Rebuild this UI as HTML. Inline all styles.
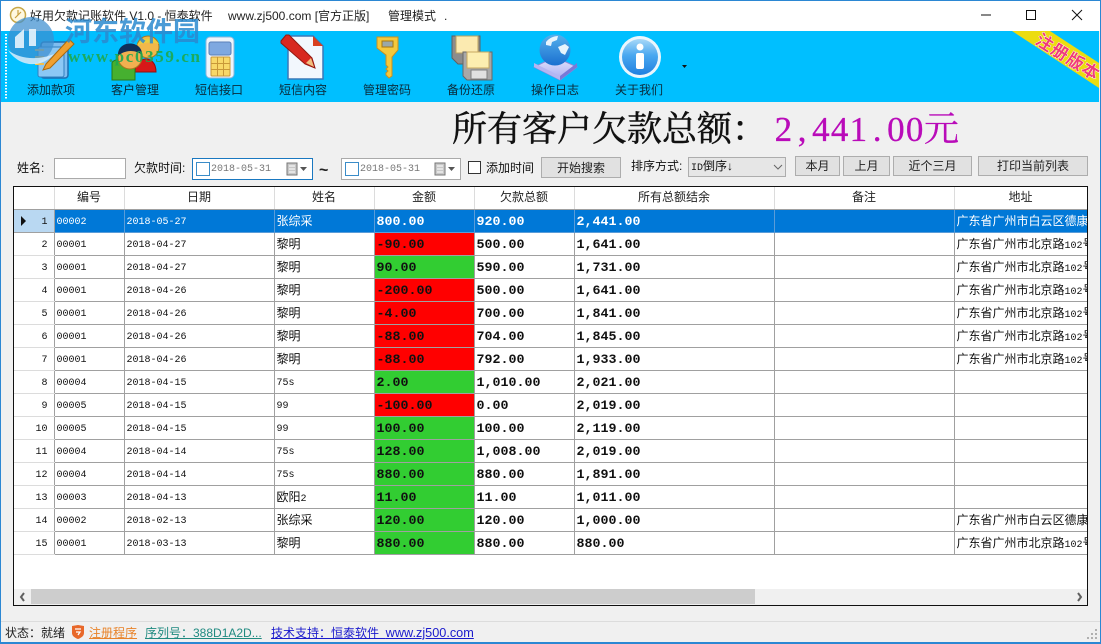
<!DOCTYPE html>
<html><head><meta charset="utf-8"><style>
html,body{margin:0;padding:0}
body{width:1101px;height:644px;overflow:hidden;position:relative;background:#f0f0f0;font-family:"Liberation Sans","Noto Sans CJK SC",sans-serif;font-size:12px;color:#111}
.a{position:absolute;white-space:nowrap}
.lb{position:absolute;top:83px;width:84px;text-align:center;font-size:12px;line-height:15px;color:#0a2a3a}
.btn{position:absolute;background:#e1e1e1;border:1px solid #adadad;box-sizing:border-box;text-align:center;font-size:12px;color:#222}
.dp{position:absolute;top:158px;height:22px;box-sizing:border-box;background:#fff;border:1px solid #aaa}
.dp i{position:absolute;left:3px;top:3px;width:12px;height:12px;border:1px solid #3a8cc8;background:#fff}
.dp b{position:absolute;left:18px;top:4px;font:normal 10px/14px "Liberation Mono",monospace;color:#777}
table{position:absolute;left:14px;top:187px;border-collapse:collapse;table-layout:fixed;width:1073px;background:#fff}
td,th{height:22px;padding:0 0 0 2px;border:1px solid #a0a0a0;font-weight:normal;overflow:hidden;white-space:nowrap;box-sizing:border-box;font-size:12px;line-height:22px}
tr{height:23px}
tr.h{height:22px}
th{border:0;border-right:1px solid #dcdcdc;border-bottom:1px solid #a0a0a0;text-align:center;color:#222;padding:0;line-height:21px;height:22px}
td.n{border:0;border-bottom:1px solid #dcdcdc;border-right:1px solid #a0a0a0;text-align:right;padding-right:6px;padding-top:4px;font:10px/18px "Liberation Mono",monospace}
td.d,td.s{font:10px/18px "Liberation Mono",monospace;padding-top:4px}
td.m{font:bold 13.33px/18px "Liberation Mono",monospace;color:#111;padding-top:4px}
td.r{background:#ff0000}
td.g{background:#32cd32}
td.c{font-size:12px}
tr.sel td{background:#0078d7;color:#fff;border-color:#5a9cd8}
tr.sel td.n{background:#b9d8f2;color:#111;border-color:#a0a0a0}
td.ad span{font:10px "Liberation Mono",monospace}
.ch{display:inline-block;width:18.75px;text-align:center;font-family:"Liberation Serif",serif;font-size:35px}
</style></head><body>

<!-- window frame -->
<div class="a" style="left:0;top:0;width:1101px;height:31px;background:#fff"></div>
<div class="a" style="left:0;top:0;width:1101px;height:1px;background:#2b87d3"></div>
<div class="a" style="left:0;top:0;width:1px;height:644px;background:#2b87d3"></div>
<div class="a" style="left:1100px;top:0;width:1px;height:644px;background:#2b87d3"></div>
<div class="a" style="left:0;top:642px;width:1101px;height:2px;background:#2b87d3"></div>

<!-- title bar -->
<svg class="a" style="left:9px;top:6px" width="18" height="18" viewBox="0 0 18 18"><circle cx="9" cy="9" r="7.5" fill="#fff8e0" stroke="#c8a848" stroke-width="1.5"/><path d="M9 4v5l-3 3M9 9l3-3" stroke="#c8a040" fill="none" stroke-width="1.2"/></svg>
<div class="a" style="left:30px;top:8px;font-size:12px;line-height:16px;color:#222">好用欠款记账软件 V1.0 - 恒泰软件</div>
<div class="a" style="left:228px;top:8px;font-size:12px;line-height:16px;color:#222">www.zj500.com [官方正版]</div>
<div class="a" style="left:388px;top:8px;font-size:12px;line-height:16px;color:#222">管理模式</div>
<div class="a" style="left:444px;top:8px;font-size:12px;line-height:16px;color:#222">.</div>
<svg class="a" style="left:970px;top:5px" width="125" height="22" viewBox="0 0 125 22"><path d="M11 10h10" stroke="#111" stroke-width="1"/><rect x="56.500" y="5.500" width="9" height="9" fill="none" stroke="#111"/><path d="M102 5l10 10M112 5l-10 10" stroke="#111" fill="none"/></svg>

<!-- toolbar -->
<div class="a" style="left:1px;top:31px;width:1098px;height:71px;background:#00bfff"></div>
<div class="a" style="left:5px;top:34px;width:2px;height:66px;background-image:linear-gradient(#fff 50%,transparent 50%);background-size:2px 3px"></div>

<svg class="a" style="left:0;top:31px" width="1101" height="71" viewBox="0 31 1101 71">
 <defs>
  <linearGradient id="gi" x1="0" y1="0" x2="0" y2="1"><stop offset="0" stop-color="#a8d8f8"/><stop offset=".45" stop-color="#4aa8f0"/><stop offset="1" stop-color="#1f80e0"/></linearGradient>
  <linearGradient id="gg" x1="0" y1="0" x2="0" y2="1"><stop offset="0" stop-color="#55b0ec"/><stop offset="1" stop-color="#1a70d0"/></linearGradient>
  <linearGradient id="gb" x1="0" y1="0" x2="0" y2="1"><stop offset="0" stop-color="#e4e6fc"/><stop offset="1" stop-color="#a8aaf2"/></linearGradient>
 </defs>
 <!-- 添加款项 -->
 <rect x="41" y="42" width="27" height="36" rx="3" fill="#7fbdf0" stroke="#1f6fb0" stroke-width="1.500"/>
 <rect x="38" y="47" width="26" height="30" rx="2" fill="#8cc8f5" stroke="#2f80c0"/>
 <path d="M35 50h9M35 57h9M35 64h9" stroke="#f0c050" stroke-width="2"/>
 <path d="M46 64l23-25 5 5-24 24-7 2z" fill="#f0a030" stroke="#a86a10"/>
 <!-- 客户管理 -->
 <path d="M135 72c0-9 6-13 11-13s10 4 10 13z" fill="#d81818" stroke="#901010"/>
 <circle cx="148" cy="47" r="11" fill="#f2b84a" stroke="#a87820"/>
 <path d="M137 45c4-8 18-9 22-1-6-2-14-2-22 1z" fill="#e8d040"/>
 <path d="M112 80V63c0-2 5-4 11-4s12 2 12 5v16z" fill="#46b030" stroke="#2a7a18"/>
 <circle cx="130" cy="57" r="12" fill="#f2b050" stroke="#a87820"/>
 <path d="M118 56c-1-17 25-16 24-1-5-5-17-6-24 1z" fill="#10305a"/>
 <!-- 短信接口 -->
 <rect x="206" y="37" width="28" height="41" rx="4" fill="#eef4fb" stroke="#8fb4d8"/>
 <rect x="209" y="42" width="22" height="13" rx="2" fill="#7ea8e0" stroke="#5a80b8"/>
 <rect x="211" y="57" width="19" height="19" rx="1" fill="#f8d868" stroke="#c89838"/>
 <path d="M217.500 57v19M223.500 57v19M211 63.500h19M211 69.500h19" stroke="#c89838"/>
 <!-- 短信内容 -->
 <path d="M288 36h25l10 10v33h-35z" fill="#f2f7fd" stroke="#3a78b8" stroke-width="1.500"/>
 <path d="M313 36l10 10h-10z" fill="#d84020"/>
 <path d="M281 41l5-6 3 0 23 23 3 10-10-4-24-21z" fill="#d82820" stroke="#901810"/>
 <path d="M306 63l5-5 3 9z" fill="#f0c080"/>
 <!-- 管理密码 -->
 <path d="M377 37h21v13l-6 7v19l-3 2-3-3 0-2 2-2-2-2 2-2-2-2v-10l-9-7z" fill="#f5c83c" stroke="#c89020"/>
 <rect x="382" y="41" width="11" height="6" fill="#9aa8a8" stroke="#a87810"/>
 <!-- 备份还原 -->
 <path d="M452 36h28v28h-22l-6-6z" fill="#8c8c8c" stroke="#606060"/>
 <rect x="456" y="36" width="22" height="17" fill="#fbeab0" stroke="#b8a060"/>
 <path d="M463 52h29v28h-25l-4-4z" fill="#a8a8a8" stroke="#686868"/>
 <rect x="467" y="52" width="22" height="16" fill="#fdeeb0" stroke="#c8a860"/>
 <rect x="471" y="70" width="16" height="9" fill="#e0e0e0" stroke="#808080"/>
 <!-- 操作日志 -->
 <path d="M534 67l21-10 22 10-17 13z" fill="url(#gb)" stroke="#8888d8"/>
 <path d="M534 67l26 13v-4l-26-13z" fill="#b4b6f2"/>
 <path d="M577 67l-17 13v-4l17-13z" fill="#7878d8"/>
 <circle cx="555" cy="50" r="15.500" fill="url(#gg)"/>
 <path d="M546 42c3-4 8-6 12-6l-1 4-5 2-1 4-5-1zM558 47l7-3 4 3-4 8-4-2z" fill="#e8f4fc"/>
 <!-- 关于我们 -->
 <circle cx="640" cy="57" r="21" fill="#eaf6fd"/>
 <circle cx="640" cy="57" r="18" fill="url(#gi)"/>
 <circle cx="640" cy="47" r="3.500" fill="#fff"/>
 <rect x="636" y="53" width="8" height="16" rx="2" fill="#fff"/>
 <!-- arrow -->
 <path d="M682 65h5l-2.500 3z" fill="#111"/>
 <!-- banner -->
 <path d="M1012 31h38l49 32v25z" fill="#ecdc10"/>
 <text x="0" y="6" transform="translate(1068 57) rotate(32)" text-anchor="middle" font-size="17" letter-spacing="1" font-weight="bold" font-family="Liberation Sans,Noto Sans CJK SC,sans-serif" fill="#f03c78" stroke="#fff" stroke-width="0.8" paint-order="stroke">注册版本</text>
</svg>

<div class="lb" style="left:9px">添加款项</div>
<div class="lb" style="left:93px">客户管理</div>
<div class="lb" style="left:177px">短信接口</div>
<div class="lb" style="left:261px">短信内容</div>
<div class="lb" style="left:345px">管理密码</div>
<div class="lb" style="left:429px">备份还原</div>
<div class="lb" style="left:513px">操作日志</div>
<div class="lb" style="left:597px">关于我们</div>

<!-- watermark -->
<svg class="a" style="left:0;top:0" width="215" height="85" viewBox="0 0 215 85">
 <circle cx="31" cy="40" r="23" fill="#3d8fd0" opacity=".72"/>
 <path d="M15 48V37l9-8v19z" fill="#e8f4fc" opacity=".9"/>
 <path d="M29 29h7v17h-7z" fill="#e8f4fc" opacity=".9"/>
 <path d="M8 50c10 16 32 20 46 4-14 6-34 6-46-4z" fill="#d8eefc" opacity=".85"/>
 <text x="65" y="41" font-size="27" font-weight="bold" fill="#2b8ad0" opacity=".85" font-family="Liberation Sans,Noto Sans CJK SC,sans-serif" textLength="135">河东软件园</text>
 <text x="68" y="62" font-size="17" font-weight="bold" fill="#1fa84e" opacity=".9" font-family="Liberation Serif,serif" textLength="132">www.pc0359.cn</text>
</svg>

<!-- headline -->
<div class="a" style="left:452px;top:108px;font-family:'Liberation Serif','Noto Serif CJK SC',serif;font-size:35px;line-height:44px;color:#111;font-weight:400;-webkit-text-stroke:.5px #111">所有客户欠款总额：</div>
<div class="a" style="left:774px;top:108px;font-family:'Liberation Serif','Noto Serif CJK SC',serif;font-size:35px;line-height:44px;color:#b90bb9;-webkit-text-stroke:.3px #b90bb9"><span class="ch">2</span><span class="ch">,</span><span class="ch">4</span><span class="ch">4</span><span class="ch">1</span><span class="ch">.</span><span class="ch">0</span><span class="ch">0</span>元</div>

<!-- filter row -->
<div class="a" style="left:17px;top:160px;line-height:16px">姓名:</div>
<div class="a" style="left:54px;top:158px;width:72px;height:21px;box-sizing:border-box;background:#fff;border:1px solid #aaa"></div>
<div class="a" style="left:134px;top:160px;line-height:16px">欠款时间:</div>
<div class="dp" style="left:192px;width:121px;border-color:#1a78c0"><i></i><b>2018-05-31</b>
 <svg class="a" style="left:93px;top:3px" width="26" height="14" viewBox="0 0 26 14"><rect x="1" y="1" width="10" height="12" fill="#c8c8c8" stroke="#777"/><path d="M3 4h6M3 7h6M3 10h6" stroke="#fff"/><path d="M14 5h7l-3.500 4z" fill="#555"/></svg></div>
<div class="a" style="left:319px;top:163px;font:bold 16px/16px 'Liberation Sans',sans-serif;color:#222">~</div>
<div class="dp" style="left:341px;width:120px"><i></i><b>2018-05-31</b>
 <svg class="a" style="left:92px;top:3px" width="26" height="14" viewBox="0 0 26 14"><rect x="1" y="1" width="10" height="12" fill="#c8c8c8" stroke="#777"/><path d="M3 4h6M3 7h6M3 10h6" stroke="#fff"/><path d="M14 5h7l-3.500 4z" fill="#555"/></svg></div>
<div class="a" style="left:468px;top:161px;width:13px;height:13px;box-sizing:border-box;background:#fff;border:1px solid #333"></div>
<div class="a" style="left:486px;top:160px;line-height:16px">添加时间</div>
<div class="btn" style="left:541px;top:157px;width:80px;height:21px;line-height:20px">开始搜索</div>
<div class="a" style="left:631px;top:158px;line-height:16px">排序方式:</div>
<div class="a" style="left:688px;top:157px;width:98px;height:20px;box-sizing:border-box;background:#e6e6e6;border:1px solid #adadad;font-size:12px;line-height:17px;padding-left:2px"><span style="font:10px 'Liberation Mono',monospace">ID</span>倒序↓
 <svg class="a" style="left:84px;top:6px" width="10" height="7" viewBox="0 0 10 7"><path d="M1 1l4 4 4-4" fill="none" stroke="#666"/></svg></div>
<div class="btn" style="left:795px;top:156px;width:45px;height:20px;line-height:18px">本月</div>
<div class="btn" style="left:843px;top:156px;width:47px;height:20px;line-height:18px">上月</div>
<div class="btn" style="left:893px;top:156px;width:79px;height:20px;line-height:18px">近个三月</div>
<div class="btn" style="left:978px;top:156px;width:110px;height:20px;line-height:18px">打印当前列表</div>

<!-- grid -->
<div class="a" style="left:13px;top:186px;width:1075px;height:420px;background:#fff"></div>
<table>
<colgroup><col style="width:40px"><col style="width:70px"><col style="width:150px"><col style="width:100px"><col style="width:100px"><col style="width:100px"><col style="width:200px"><col style="width:180px"><col style="width:133px"></colgroup>
<tr class="h"><th></th><th>编号</th><th>日期</th><th>姓名</th><th>金额</th><th>欠款总额</th><th>所有总额结余</th><th>备注</th><th>地址</th></tr>
<tr class="sel"><td class="n">1</td><td class="s">00002</td><td class="d">2018-05-27</td><td class="c">张综采</td><td class="m">800.00</td><td class="m">920.00</td><td class="m">2,441.00</td><td></td><td class="ad">广东省广州市白云区德康</td></tr>
<tr><td class="n">2</td><td class="s">00001</td><td class="d">2018-04-27</td><td class="c">黎明</td><td class="m r">-90.00</td><td class="m">500.00</td><td class="m">1,641.00</td><td></td><td class="ad">广东省广州市北京路<span>102</span>号</td></tr>
<tr><td class="n">3</td><td class="s">00001</td><td class="d">2018-04-27</td><td class="c">黎明</td><td class="m g">90.00</td><td class="m">590.00</td><td class="m">1,731.00</td><td></td><td class="ad">广东省广州市北京路<span>102</span>号</td></tr>
<tr><td class="n">4</td><td class="s">00001</td><td class="d">2018-04-26</td><td class="c">黎明</td><td class="m r">-200.00</td><td class="m">500.00</td><td class="m">1,641.00</td><td></td><td class="ad">广东省广州市北京路<span>102</span>号</td></tr>
<tr><td class="n">5</td><td class="s">00001</td><td class="d">2018-04-26</td><td class="c">黎明</td><td class="m r">-4.00</td><td class="m">700.00</td><td class="m">1,841.00</td><td></td><td class="ad">广东省广州市北京路<span>102</span>号</td></tr>
<tr><td class="n">6</td><td class="s">00001</td><td class="d">2018-04-26</td><td class="c">黎明</td><td class="m r">-88.00</td><td class="m">704.00</td><td class="m">1,845.00</td><td></td><td class="ad">广东省广州市北京路<span>102</span>号</td></tr>
<tr><td class="n">7</td><td class="s">00001</td><td class="d">2018-04-26</td><td class="c">黎明</td><td class="m r">-88.00</td><td class="m">792.00</td><td class="m">1,933.00</td><td></td><td class="ad">广东省广州市北京路<span>102</span>号</td></tr>
<tr><td class="n">8</td><td class="s">00004</td><td class="d">2018-04-15</td><td class="s">75s</td><td class="m g">2.00</td><td class="m">1,010.00</td><td class="m">2,021.00</td><td></td><td></td></tr>
<tr><td class="n">9</td><td class="s">00005</td><td class="d">2018-04-15</td><td class="s">99</td><td class="m r">-100.00</td><td class="m">0.00</td><td class="m">2,019.00</td><td></td><td></td></tr>
<tr><td class="n">10</td><td class="s">00005</td><td class="d">2018-04-15</td><td class="s">99</td><td class="m g">100.00</td><td class="m">100.00</td><td class="m">2,119.00</td><td></td><td></td></tr>
<tr><td class="n">11</td><td class="s">00004</td><td class="d">2018-04-14</td><td class="s">75s</td><td class="m g">128.00</td><td class="m">1,008.00</td><td class="m">2,019.00</td><td></td><td></td></tr>
<tr><td class="n">12</td><td class="s">00004</td><td class="d">2018-04-14</td><td class="s">75s</td><td class="m g">880.00</td><td class="m">880.00</td><td class="m">1,891.00</td><td></td><td></td></tr>
<tr><td class="n">13</td><td class="s">00003</td><td class="d">2018-04-13</td><td class="c">欧阳<span style="font:10px 'Liberation Mono',monospace">2</span></td><td class="m g">11.00</td><td class="m">11.00</td><td class="m">1,011.00</td><td></td><td></td></tr>
<tr><td class="n">14</td><td class="s">00002</td><td class="d">2018-02-13</td><td class="c">张综采</td><td class="m g">120.00</td><td class="m">120.00</td><td class="m">1,000.00</td><td></td><td class="ad">广东省广州市白云区德康</td></tr>
<tr><td class="n">15</td><td class="s">00001</td><td class="d">2018-03-13</td><td class="c">黎明</td><td class="m g">880.00</td><td class="m">880.00</td><td class="m">880.00</td><td></td><td class="ad">广东省广州市北京路<span>102</span>号</td></tr>
</table>

<!-- row arrow -->
<svg class="a" style="left:20px;top:216px" width="7" height="10" viewBox="0 0 7 10"><path d="M1 0l5 5-5 5z" fill="#111"/></svg>

<!-- scrollbar -->
<div class="a" style="left:14px;top:589px;width:1073px;height:16px;background:#f0f0f0"></div>
<div class="a" style="left:31px;top:589px;width:724px;height:15px;background:#cdcdcd"></div>
<svg class="a" style="left:14px;top:589px" width="1073" height="16" viewBox="0 0 1073 16"><path d="M10 4l-3 4 3 4M1064 4l3 4-3 4" fill="none" stroke="#606060" stroke-width="2"/></svg>

<!-- grid frame on top -->
<div class="a" style="left:13px;top:186px;width:1075px;height:420px;box-sizing:border-box;border:1px solid #111"></div>

<!-- status bar -->
<div class="a" style="left:1px;top:621px;width:1099px;height:1px;background:#dcdcdc"></div>
<div class="a" style="left:5px;top:625px;line-height:16px;color:#222">状态：就绪</div>
<svg class="a" style="left:71px;top:624px" width="14" height="16" viewBox="0 0 14 16"><path d="M1 2l6-1 6 1v7c0 3-3 5-6 6-3-1-6-3-6-6z" fill="#e8682a"/><path d="M4 5h6M5 8h4l-2 3" stroke="#fff" fill="none" stroke-width="1.300"/></svg>
<div class="a" style="left:89px;top:625px;line-height:16px;color:#e8832a;text-decoration:underline">注册程序</div>
<div class="a" style="left:145px;top:625px;line-height:16px;color:#1f8a80;text-decoration:underline">序列号：388D1A2D...</div>
<div class="a" style="left:271px;top:625px;line-height:16px;color:#1a1acc;text-decoration:underline">技术支持：恒泰软件&nbsp; <span style="font-size:12.7px">www.zj500.com</span></div>
<svg class="a" style="left:1086px;top:628px" width="12" height="13" viewBox="0 0 12 13"><path d="M9 1h2v2H9zM5 5h2v2H5zM9 5h2v2H9zM1 9h2v2H1zM5 9h2v2H5zM9 9h2v2H9z" fill="#b0b0b0"/></svg>

</body></html>
